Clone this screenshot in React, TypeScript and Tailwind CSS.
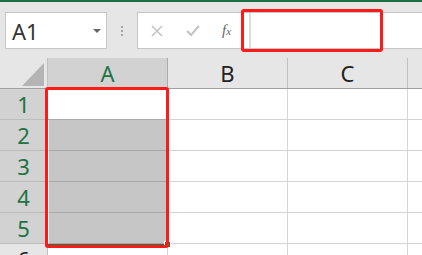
import React from 'react';

const ROWS = [1, 2, 3, 4, 5];

export default function App() {
  return (
    <div
      className="relative w-[422px] h-[255px] overflow-hidden bg-[#e6e6e6] text-[#222]"
      style={{ fontFamily: '"Noto Sans", "Noto Sans CJK JP", sans-serif' }}
    >
      {/* ribbon edge */}
      <div className="h-[2px] bg-[#1f6e43]" />

      {/* name box + formula bar */}
      <div className="h-[56px] flex items-start pt-[10px]">
        <div className="ml-[5px] w-[102px] h-[37px] bg-white border border-[#c6c6c6] flex items-center pl-[6px] pr-[5px]">
          <span className="text-[22px] leading-none text-[#333] flex-1">A1</span>
          <svg width="8" height="4" viewBox="0 0 8 4">
            <path d="M0 0 L8 0 L4 4 Z" fill="#666" />
          </svg>
        </div>

        <div className="w-[30px] h-[37px] flex flex-col items-center justify-center gap-[2px]">
          <div className="w-[2px] h-[2px] bg-[#a6a6a6]" />
          <div className="w-[2px] h-[2px] bg-[#a6a6a6]" />
          <div className="w-[2px] h-[2px] bg-[#a6a6a6]" />
        </div>

        <div className="flex-1 h-[37px] bg-white border-y border-l border-[#c6c6c6] flex items-center">
          <div className="w-[111px] flex items-center h-full">
            <svg className="ml-[13px]" width="12" height="12" viewBox="0 0 12 12">
              <path d="M1 1 L11 11 M11 1 L1 11" stroke="#c3c3c3" strokeWidth="1.5" />
            </svg>
            <svg className="ml-[23px]" width="14" height="12" viewBox="0 0 14 12">
              <path d="M1 6 L5 10 L13 1" stroke="#c3c3c3" strokeWidth="2" fill="none" />
            </svg>
            <span
              className="ml-[22px] text-[#666] italic text-[15px] leading-none"
              style={{ fontFamily: '"Liberation Serif", serif' }}
            >
              f<span className="text-[11px]">x</span>
            </span>
          </div>
          <div className="h-full border-l-2 border-[#dcdcdc] flex-1" />
        </div>
      </div>

      {/* column headers */}
      <div className="flex h-[31px] border-b border-[#a0a0a0]">
        <div className="w-[48px] border-r border-[#c0c0c0] relative">
          <svg className="absolute left-[22px] top-[5px]" width="22" height="23" viewBox="0 0 22 23">
            <path d="M22 0 L22 23 L0 23 Z" fill="#b4b4b4" />
          </svg>
        </div>
        <div className="w-[120px] bg-[#d2d2d2] border-r border-[#ababab] flex items-center justify-center text-[22px] text-[#217346]">
          A
        </div>
        <div className="w-[120px] border-r border-[#c0c0c0] flex items-center justify-center text-[22px]">
          B
        </div>
        <div className="w-[120px] border-r border-[#c0c0c0] flex items-center justify-center text-[22px]">
          C
        </div>
        <div className="flex-1" />
      </div>

      {/* rows */}
      {ROWS.map((r) => (
        <div key={r} className="flex h-[31px]">
          <div className="w-[48px] bg-[#d2d2d2] border-r border-b border-[#bcbcbc] flex items-center justify-center text-[22px] text-[#217346]">
            {r}
          </div>
          <div
            className={
              r === 1
                ? 'w-[120px] bg-white border-r border-b border-[#a8a8a8]'
                : 'w-[120px] bg-[#c6c6c6] border-l border-white border-r border-r-[#d4d4d4] border-b border-b-[#a8a8a8]'
            }
          />
          <div className="w-[120px] bg-white border-r border-b border-[#d4d4d4]" />
          <div className="w-[120px] bg-white border-r border-b border-[#d4d4d4]" />
          <div className="flex-1 bg-white border-b border-[#d4d4d4]" />
        </div>
      ))}
      <div className="flex h-[31px]">
        <div className="w-[48px] border-r border-[#c0c0c0] flex justify-center pt-[1px] text-[22px] leading-[28px]">
          6
        </div>
        <div className="w-[120px] bg-white border-r border-[#d4d4d4]" />
        <div className="w-[120px] bg-white border-r border-[#d4d4d4]" />
        <div className="w-[120px] bg-white border-r border-[#d4d4d4]" />
        <div className="flex-1 bg-white" />
      </div>

      {/* selection border + fill handle */}
      <div className="absolute left-[46px] top-[88px] w-[122px] h-[158px] border-2 border-[#217346]" />
      <div className="absolute left-[164px] top-[241px] w-[7px] h-[7px] bg-[#217346] border border-white" />

      {/* red annotation boxes */}
      <div className="absolute left-[241px] top-[9px] w-[142px] h-[43px] border-[3px] border-[#ff1a1a] rounded-[3px]" />
      <div className="absolute left-[45px] top-[87px] w-[124px] h-[161px] border-[3px] border-[#ff1a1a] rounded-[3px]" />
    </div>
  );
}
